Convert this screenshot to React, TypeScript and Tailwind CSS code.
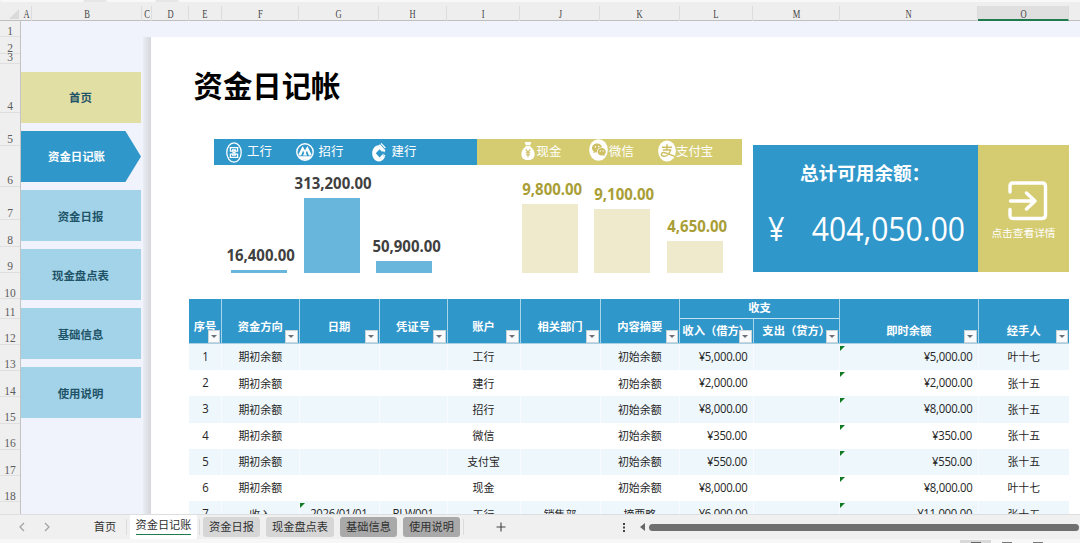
import React from "react";

const COLUMNS: { name: string; width: number }[] = [
  { name: "A", width: 11 },
  { name: "B", width: 109.5 },
  { name: "C", width: 10.5 },
  { name: "D", width: 37 },
  { name: "E", width: 32.5 },
  { name: "F", width: 77.5 },
  { name: "G", width: 80 },
  { name: "H", width: 68 },
  { name: "I", width: 73 },
  { name: "J", width: 80 },
  { name: "K", width: 79.5 },
  { name: "L", width: 73.5 },
  { name: "M", width: 86.5 },
  { name: "N", width: 138.5 },
  { name: "O", width: 91 },
];

const ROW_HEIGHTS = [16, 17, 9.5, 49, 33, 41, 33, 27, 26, 26.5, 19.5, 26, 26, 26.5, 26.5, 26, 26.5, 26];

const NAV = [
  { label: "首页", tone: "bg-[#e2dfa5] text-[#1f5468]" },
  { label: "资金日记账", tone: "bg-[#3097cb] text-white [clip-path:polygon(0_0,87%_0,100%_50%,87%_100%,0_100%)]" },
  { label: "资金日报", tone: "bg-[#a3d3e9] text-[#1f5468]" },
  { label: "现金盘点表", tone: "bg-[#a3d3e9] text-[#1f5468]" },
  { label: "基础信息", tone: "bg-[#a3d3e9] text-[#1f5468]" },
  { label: "使用说明", tone: "bg-[#a3d3e9] text-[#1f5468]" },
];

const BANK_BARS = [
  { value: "16,400.00", height: 3.5 },
  { value: "313,200.00", height: 75 },
  { value: "50,900.00", height: 12.5 },
];
const CASH_BARS = [
  { value: "9,800.00", height: 69 },
  { value: "9,100.00", height: 64 },
  { value: "4,650.00", height: 32.5 },
];

const ROWS = [
  ["1", "期初余额", "", "", "工行", "", "初始余额", "¥5,000.00", "", "¥5,000.00", "叶十七"],
  ["2", "期初余额", "", "", "建行", "", "初始余额", "¥2,000.00", "", "¥2,000.00", "张十五"],
  ["3", "期初余额", "", "", "招行", "", "初始余额", "¥8,000.00", "", "¥8,000.00", "张十五"],
  ["4", "期初余额", "", "", "微信", "", "初始余额", "¥350.00", "", "¥350.00", "张十五"],
  ["5", "期初余额", "", "", "支付宝", "", "初始余额", "¥550.00", "", "¥550.00", "张十五"],
  ["6", "期初余额", "", "", "现金", "", "初始余额", "¥8,000.00", "", "¥8,000.00", "叶十七"],
  ["7", "收入", "2026/01/01", "RLW001", "工行", "销售部", "摘要略", "¥6,000.00", "", "¥11,000.00", "张十五"],
];

const GRID = "grid grid-cols-[32px_77.5px_80px_68px_73px_80px_79.5px_73.5px_86.5px_138.5px_91.5px]";

function IcbcIcon() {
  return (
    <svg viewBox="0 0 16 21" className="h-[21px] w-4 shrink-0" fill="none" stroke="white">
      <ellipse cx="8" cy="10.5" rx="7.2" ry="9.6" strokeWidth="1.3" />
      <path d="M3.6 5.6H12.4M3.6 15.4H12.4M4.4 5.6V9H7.1V12H4.4V15.4M11.6 5.6V9H8.9V12H11.6V15.4M6 7.8H10M6 13.2H10M6.5 10.5H9.5" strokeWidth="1.25" />
    </svg>
  );
}

function CmbIcon() {
  return (
    <svg viewBox="0 0 18 18" className="h-[18px] w-[18px] shrink-0">
      <circle cx="9" cy="9" r="8.2" fill="none" stroke="white" strokeWidth="1.4" />
      <path d="M2 12.6L6.6 3L9 7.6L11.4 3L16 12.6H12.9L10.9 7.5L9.9 10L11 12.6H7L8.1 10L7.1 7.5L5.1 12.6Z" fill="white" />
      <path d="M2.3 13.2H15.7A8 8 0 0 1 2.3 13.2Z" fill="white" />
    </svg>
  );
}

function CcbIcon() {
  return (
    <svg viewBox="0 0 14 20" className="h-5 w-3.5 shrink-0" fill="white">
      <path d="M6.6 3.2C2.8 3.6.2 7 .2 11.3C.2 15.9 3 19.4 6.7 19.4C9.5 19.4 11.6 17.8 12.8 15.2L10.6 12.3L7.6 15.4L3.8 11.3L7.6 7.2L10 9.8L12 8.2Z" />
      <path d="M6.6 3.2L8 2.2L13.4 8.2L12.2 10.4Z" />
      <path d="M9 1.3L13.4 6" fill="none" stroke="white" strokeWidth="1.2" />
      <path d="M10.6 11.2L13.4 13.6L12.8 15.2Z" />
    </svg>
  );
}

function MoneyBagIcon() {
  return (
    <svg viewBox="0 0 14 20" className="h-5 w-3.5 shrink-0">
      <path d="M3.6 1.2C5 .4 6 1.8 7 .8C8 1.8 9 .4 10.4 1.2L9.2 4H4.8Z" fill="white" />
      <path d="M4.5 4.7H9.5V5.7C12 7.2 13.6 10.3 13.6 13C13.6 17.5 11 19 7 19S.4 17.5 .4 13C.4 10.3 2 7.2 4.5 5.7Z" fill="white" />
      <path d="M4.7 8.4L7 11.4L9.3 8.4M7 11.4V16M4.8 11.8H9.2M4.8 13.7H9.2" fill="none" stroke="#cdbf62" strokeWidth="1.1" />
    </svg>
  );
}

function WechatIcon() {
  return (
    <svg viewBox="0 0 19 22" className="h-[22px] w-[19px] shrink-0">
      <ellipse cx="9.5" cy="11" rx="9.3" ry="10.8" fill="white" />
      <path d="M8.2 4.5C5.2 4.5 3 6.5 3 9.1C3 10.6 3.7 11.8 4.8 12.6L4.3 14.2L6.3 13.3L8 13.6C7.4 10.5 9.7 8.4 13 8.3C12.6 6.1 10.6 4.5 8.2 4.5Z" fill="#cdbf62" />
      <path d="M12.7 9C10.2 9 8.6 10.7 8.6 12.8S10.4 16.5 12.7 16.5L14 16.3L15.8 17.2L15.3 15.7C16.3 15 16.8 14 16.8 12.8C16.8 10.7 15.1 9 12.7 9Z" fill="#cdbf62" />
      <g fill="white">
        <circle cx="6.4" cy="7.9" r=".8" />
        <circle cx="9.8" cy="7.6" r=".8" />
        <circle cx="11.3" cy="12" r=".65" />
        <circle cx="14.1" cy="12" r=".65" />
      </g>
    </svg>
  );
}

function AlipayIcon() {
  return (
    <svg viewBox="0 0 18 22" className="h-[22px] w-[18px] shrink-0">
      <ellipse cx="9" cy="11" rx="8.9" ry="10.6" fill="white" />
      <path d="M4 7.2H14M9 4.2V9.8M4.8 9.9H12.6C11.6 13.8 8.6 16.5 5.5 16.2C2.4 15.8 2.9 12.8 5.4 12.5C8.4 12.2 12 15.2 16.6 16.2" fill="none" stroke="#cdbf62" strokeWidth="1.5" />
    </svg>
  );
}

function Legend({ icon, label, className, labelClass = "" }: { icon: React.ReactNode; label: string; className: string; labelClass?: string }) {
  return (
    <div className={`flex shrink-0 items-center ${className}`}>
      {icon}
      <span className={`whitespace-nowrap ${labelClass}`}>{label}</span>
    </div>
  );
}

function Bars({ items, bar, text }: { items: { value: string; height: number }[]; bar: string; text: string }) {
  return (
    <div className="flex items-end gap-[16.6px]">
      {items.map((b) => (
        <div key={b.value} className="flex w-14 flex-col items-center">
          <span className={`mb-[5px] ml-1 scale-x-[0.96] font-['Open_Sans'] text-[15.6px] leading-5 font-bold whitespace-nowrap ${text}`}>{b.value}</span>
          <div className={`w-full ${bar}`} style={{ height: b.height }} />
        </div>
      ))}
    </div>
  );
}

function Filter() {
  return (
    <span className="absolute right-px bottom-0 flex h-[13px] w-[12.5px] items-center justify-center border border-[#c9d3da] bg-[#f9fafc]">
      <svg viewBox="0 0 6 3" className="h-[3px] w-1.5">
        <path d="M0 0H6L3 3Z" fill="#6a7178" />
      </svg>
    </span>
  );
}

function Head({ label, low }: { label: string; low?: boolean }) {
  return (
    <div className={`relative flex justify-center border-l border-[#a9d5ea] leading-4 whitespace-nowrap first:border-l-0 ${low ? "pt-6" : "pt-5"}`}>
      {label}
      <Filter />
    </div>
  );
}

function SubHead({ label }: { label: string }) {
  return (
    <div className="relative flex justify-center border-l border-[#a9d5ea] pt-1 leading-4 whitespace-nowrap first:border-l-0">
      {label}
      <Filter />
    </div>
  );
}

function CornerMark() {
  return (
    <svg viewBox="0 0 5 5" className="absolute top-0.5 left-0 h-[5px] w-[5px]">
      <path d="M0 0H5L0 5Z" fill="#127a22" />
    </svg>
  );
}

function Cell({ value, column }: { value: string; column: number }) {
  const money = column === 7 || column === 9;
  const marked = column === 9 || (column === 2 && value !== "");
  const numeric = /^[\x00-\xff]+$/.test(value);
  const scaled = money ? "origin-right scale-x-[0.93]" : numeric ? "scale-x-[0.93]" : "";
  return (
    <div className={`relative flex items-center border-l border-white/60 whitespace-nowrap first:border-l-0 ${money ? "justify-end pr-[5.5px]" : "justify-center"} ${numeric ? "text-[12.2px] tracking-[-0.3px]" : "pt-px text-[10.9px]"}`}>
      {marked && <CornerMark />}
      <span className={scaled}>{value}</span>
    </div>
  );
}

function Ledger() {
  return (
    <div className="w-[880px] text-[#262626]">
      <div className={`${GRID} h-[45px] border-b border-[#a9cfe2] bg-[#3097cb] text-[11.3px] font-bold text-white`}>
        <Head label="序号" />
        <Head label="资金方向" />
        <Head label="日期" />
        <Head label="凭证号" />
        <Head label="账户" />
        <Head label="相关部门" />
        <Head label="内容摘要" />
        <div className="col-span-2 flex flex-col border-l border-[#a9d5ea]">
          <div className="flex h-5 items-center justify-center border-b border-[#c4e2f0]">收支</div>
          <div className="grid grow grid-cols-[72.5px_86.5px]">
            <SubHead label="收入（借方）" />
            <SubHead label="支出（贷方）" />
          </div>
        </div>
        <Head label="即时余额" low />
        <Head label="经手人" low />
      </div>
      {ROWS.map((row, i) => (
        <div key={row[0]} className={`${GRID} h-[26.2px] ${i % 2 ? "bg-white" : "bg-[#eef7fc]"}`}>
          {row.map((value, c) => (
            <Cell key={c} value={value} column={c} />
          ))}
        </div>
      ))}
    </div>
  );
}

function ColumnHeader() {
  return (
    <div className="flex h-[21px] shrink-0 flex-col border-b border-[#bfbfbf] bg-[#eeeeee]">
      <div className="flex h-0.5 shrink-0 gap-[22px] bg-[#e6e6e6]">
        <div className="w-[84px] rounded-b bg-[#f8f8f8]" />
        <div className="w-[50px] rounded-b bg-[#f8f8f8]" />
        <div className="grow rounded-bl bg-[#f8f8f8]" />
      </div>
      <div className="flex grow pt-1">
        <div className="flex w-[21px] shrink-0 items-end justify-end pr-0.5 pb-0.5">
          <svg viewBox="0 0 10 10" className="h-2.5 w-2.5">
            <path d="M10 0V10H0Z" fill="#dadada" />
          </svg>
        </div>
        {COLUMNS.map((c) => (
          <div
            key={c.name}
            style={{ width: c.width }}
            className={`flex h-[15px] shrink-0 items-center justify-center border-r border-[#dcdcdc] pl-px font-['Liberation_Serif',serif] text-[12.5px] leading-none text-[#444] ${c.name === "O" ? "border-b-2 border-b-[#1f7a4d] bg-[#dfdfdf] pt-[3px]" : "pt-0.5"}`}
          >
            <span className="inline-block scale-x-[0.68]">{c.name}</span>
          </div>
        ))}
      </div>
    </div>
  );
}

function RowHeader() {
  return (
    <div className="flex w-[21px] shrink-0 flex-col border-r border-[#c4c4c4] bg-[#efefef] pb-3">
      {ROW_HEIGHTS.map((h, i) => (
        <div
          key={i}
          style={{ height: h }}
          className="flex shrink-0 items-end justify-center border-b border-[#dfdfdf] font-['Liberation_Serif',serif] text-[11.5px] leading-[9.5px] text-[#5c5c5c]"
        >
          {i + 1}
        </div>
      ))}
    </div>
  );
}

function Tab({ label, className }: { label: string; className: string }) {
  return <div className={`flex h-5 shrink-0 items-center justify-center rounded-[3px] whitespace-nowrap ${className}`}>{label}</div>;
}

function TabBar() {
  return (
    <div className="flex h-[25px] shrink-0 items-center border-t border-[#dedede] bg-[#f0f0f0] text-[11.2px] text-[#303030]">
      <svg viewBox="0 0 34 10" className="ml-[18px] h-2.5 w-[34px] shrink-0" fill="none" stroke="#a0a0a0" strokeWidth="1.2">
        <path d="M6 1L2 5L6 9M27 1L31 5L27 9" />
      </svg>
      <Tab label="首页" className="ml-[34px] w-[38px]" />
      <div className="mr-[3px] ml-0.5 h-4 w-px shrink-0 bg-[#dcdcdc]" />
      <div className="flex h-[25px] w-[67px] shrink-0 justify-center rounded-b bg-white">
        <div className="mt-px h-[19px] border-b border-[#1f7a4d] leading-[18px] whitespace-nowrap">资金日记账</div>
      </div>
      <div className="mr-[3px] ml-0.5 h-4 w-px shrink-0 bg-[#dcdcdc]" />
      <Tab label="资金日报" className="w-[57px] bg-[#d6d6d6]" />
      <Tab label="现金盘点表" className="ml-1.5 w-[68px] bg-[#d6d6d6]" />
      <Tab label="基础信息" className="ml-1.5 w-[57px] bg-[#a9a9a9]" />
      <Tab label="使用说明" className="ml-1.5 w-[57px] bg-[#a9a9a9]" />
      <div className="ml-[3px] h-4 w-px shrink-0 bg-[#dcdcdc]" />
      <svg viewBox="0 0 10 10" className="ml-8 h-2.5 w-2.5 shrink-0" stroke="#444" strokeWidth="1.1">
        <path d="M5 .5V9.5M.5 5H9.5" />
      </svg>
      <svg viewBox="0 0 2 9" className="ml-[117px] h-[9px] w-0.5 shrink-0" fill="#444">
        <path d="M0 0H2V2H0ZM0 3.5H2V5.5H0ZM0 7H2V9H0Z" />
      </svg>
      <svg viewBox="0 0 5 8" className="ml-[15px] h-2 w-[5px] shrink-0" fill="#666">
        <path d="M5 0V8L0 4Z" />
      </svg>
      <div className="mr-px ml-1 h-[7px] grow rounded-full bg-[#6f6f6f]" />
    </div>
  );
}

export default function App() {
  return (
    <div className="flex h-[543px] w-[1080px] flex-col overflow-hidden bg-[#f0f3fb] font-['Open_Sans','Noto_Sans_CJK_SC',sans-serif]">
      <ColumnHeader />
      <main className="flex h-[493px] shrink-0 overflow-hidden">
        <RowHeader />
        <nav className="flex w-[122px] shrink-0 flex-col gap-[8.3px] pt-[51px]">
          {NAV.map((n) => (
            <div key={n.label} className={`flex h-[50.8px] w-[120px] shrink-0 items-center justify-center pt-px text-[11.4px] font-bold ${n.tone} ${n.label === "资金日记账" ? "pr-[9px]" : "pr-px"}`}>
              {n.label}
            </div>
          ))}
        </nav>
        <div className="mt-4 w-2 shrink-0 bg-linear-to-r from-[#eaedf4] to-[#d5d7dc]" />
        <section className="mt-4 flex w-[929px] shrink-0 flex-col bg-white">
          <h1 className="mt-[29px] ml-[42.5px] h-[37px] shrink-0 font-['Noto_Sans_CJK_SC'] text-[29.4px] leading-9 font-bold text-black">资金日记帐</h1>
          <div className="mt-9 ml-[63px] flex shrink-0 items-start">
            <div className="w-[528px]">
              <div className="flex h-[26px] text-[12.4px] text-white">
                <div className="flex w-[263px] bg-[#3097cb] pl-3">
                  <Legend icon={<IcbcIcon />} label="工行" className="w-[69.5px] gap-[5px]" />
                  <Legend icon={<CmbIcon />} label="招行" className="w-[76px] gap-[5px]" />
                  <Legend icon={<CcbIcon />} label="建行" className="gap-1.5" />
                </div>
                <div className="flex w-[265px] bg-[#d5cc72] pl-[43.5px]">
                  <Legend icon={<MoneyBagIcon />} label="现金" className="w-[68.5px] gap-0.5 pb-[3px]" labelClass="pt-[3px]" />
                  <Legend icon={<WechatIcon />} label="微信" className="w-[69px] gap-px pb-1" labelClass="pt-1" />
                  <Legend icon={<AlipayIcon />} label="支付宝" className="pb-0.5" labelClass="pt-0.5" />
                </div>
              </div>
              <div className="flex h-[108px] items-end gap-[89.5px] pl-[17px]">
                <Bars items={BANK_BARS} bar="bg-[#69b6dd]" text="text-[#404040]" />
                <Bars items={CASH_BARS} bar="bg-[#eeeacb]" text="text-[#a99e35]" />
              </div>
            </div>
            <div className="mt-1.5 ml-[10.5px] flex h-[127px] text-white">
              <div className="flex w-[225.5px] flex-col bg-[#3097cb] pt-4">
                <div className="pl-[47.5px] text-[18.6px] leading-6 font-bold whitespace-nowrap">总计可用余额：</div>
                <div className="mt-6 flex h-10 items-center justify-between pr-[13px] pl-[15px] text-[32px] leading-10">
                  <span className="origin-left scale-x-[0.9]">¥</span>
                  <span className="origin-right scale-x-[0.94]">404,050.00</span>
                </div>
              </div>
              <div className="flex w-[91px] flex-col items-center bg-[#d5cc72] pt-9">
                <svg viewBox="0 0 40 40" className="ml-2 h-10 w-10" fill="none" stroke="white" strokeWidth="3.4" strokeLinecap="round" strokeLinejoin="round">
                  <path d="M2 11V5Q2 2 5 2H34Q37.5 2 37.5 5V34Q37.5 37.5 34 37.5H5Q2 37.5 2 34V28.5M2.5 20H27M18.5 12L27 20L18.5 28" />
                </svg>
                <div className="mt-1 text-[10.7px] leading-4">点击查看详情</div>
              </div>
            </div>
          </div>
          <div className="mt-[26px] ml-[38px] shrink-0">
            <Ledger />
          </div>
        </section>
      </main>
      <TabBar />
      <footer className="flex h-1 shrink-0 items-end bg-[#f7f7f7]">
        <div className="ml-[960px] flex h-[3px] w-[31px] items-end justify-center bg-[#d9d9d9]">
          <div className="h-px w-2.5 bg-[#666]" />
        </div>
        <div className="ml-[11px] h-px w-2.5 bg-[#777]" />
        <div className="ml-[21px] h-px w-2.5 bg-[#777]" />
      </footer>
    </div>
  );
}
